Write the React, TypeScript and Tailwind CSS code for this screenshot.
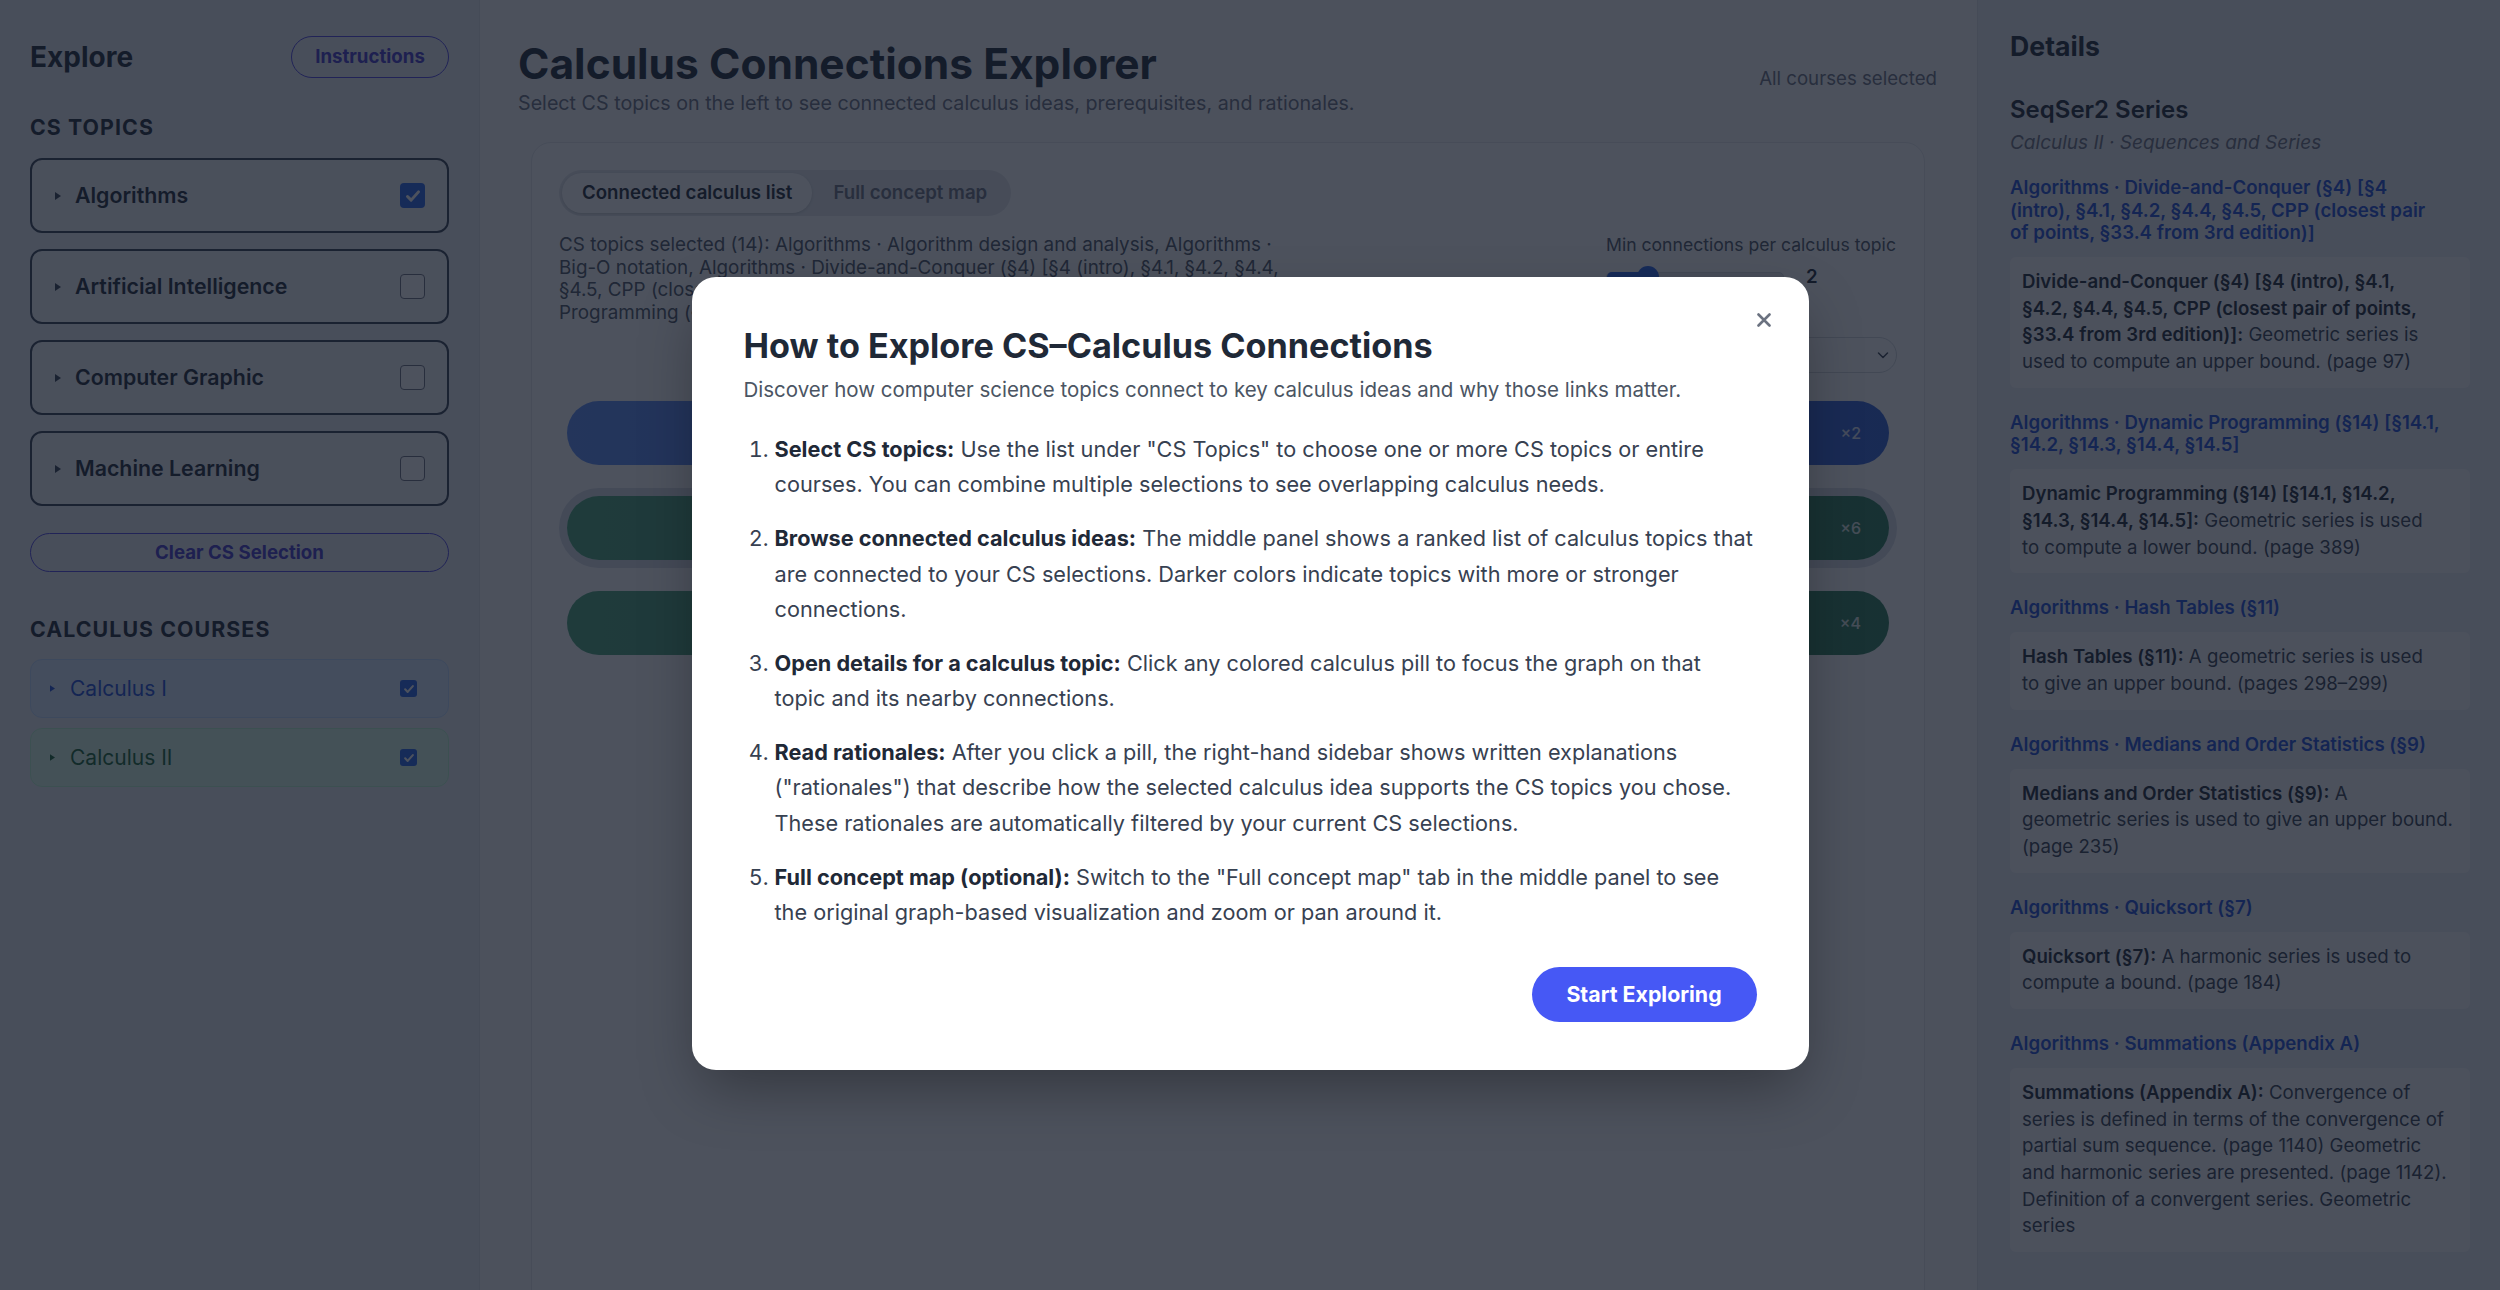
import React from "react";

const topics = ["Algorithms", "Artificial Intelligence", "Computer Graphic", "Machine Learning"];

function Tri({ className }: { className: string }) {
  return (
    <svg width="6" height="8" viewBox="0 0 6 8" className={className}>
      <path d="M0 0L6 4L0 8Z" fill="currentColor" />
    </svg>
  );
}

function CheckMark({ className }: { className: string }) {
  return (
    <svg viewBox="0 0 16 16" className={className} fill="none">
      <path d="M3.6 8.4l2.9 2.9 5.9-6.6" stroke="white" strokeWidth="2.4" strokeLinecap="round" strokeLinejoin="round" />
    </svg>
  );
}

function TopicCard({ name, checked }: { name: string; checked: boolean }) {
  return (
    <div className="flex h-[75px] items-center rounded-[12px] border-2 border-[#374151] bg-white/40 pl-[23px] pr-[22px]">
      <Tri className="text-[#374151]" />
      <span className="ml-[14px] text-[21.33px] font-semibold text-[#1f2937]">{name}</span>
      {checked ? (
        <span className="ml-auto flex h-[25px] w-[25px] items-center justify-center rounded-[4px] bg-[#2563eb]">
          <CheckMark className="h-[20px] w-[20px]" />
        </span>
      ) : (
        <span className="ml-auto h-[25px] w-[25px] rounded-[4px] border-[1.5px] border-[#6b7280] bg-white" />
      )}
    </div>
  );
}

function CourseCard({ name, tone }: { name: string; tone: "blue" | "green" }) {
  const box =
    tone === "blue"
      ? "border-[#bfdbfe] bg-[#dbeafe] text-[#1d4ed8]"
      : "border-[#bbf7d0] bg-[#dcfce7] text-[#166534]";
  return (
    <div className={`flex h-[59px] items-center rounded-[12px] border pl-[19px] pr-[31px] ${box}`}>
      <Tri className="h-[7px] w-[5px]" />
      <span className="ml-[15px] text-[21px]">{name}</span>
      <span className="ml-auto flex h-[17px] w-[17px] items-center justify-center rounded-[3px] bg-[#2563eb]">
        <CheckMark className="h-[14px] w-[14px]" />
      </span>
    </div>
  );
}

function LeftSidebar() {
  return (
    <aside className="w-[480px] shrink-0 border-r border-[#dfe2e8] bg-[#eceef2] px-[30px] pt-[36px]">
      <div className="flex items-center justify-between">
        <h2 className="text-[28px] font-bold leading-[42px] text-[#1f2937]">Explore</h2>
        <button className="h-[42px] w-[158px] rounded-full border border-[#4f46e5] text-[18.67px] font-bold text-[#4338ca]">
          Instructions
        </button>
      </div>
      <h3 className="mt-[35px] text-[21.33px] font-bold uppercase leading-[28px] tracking-wider text-[#1f2937]">
        CS Topics
      </h3>
      <div className="mt-[17px] flex flex-col gap-[16px]">
        {topics.map((t, i) => (
          <TopicCard key={t} name={t} checked={i === 0} />
        ))}
      </div>
      <button className="mt-[27px] h-[39px] w-full rounded-full border border-[#4f46e5] text-[18.67px] font-bold text-[#4338ca]">
        Clear CS Selection
      </button>
      <h3 className="mt-[43px] text-[21.33px] font-bold uppercase leading-[28px] tracking-wider text-[#1f2937]">
        Calculus Courses
      </h3>
      <div className="mt-[16px] flex flex-col gap-[10px]">
        <CourseCard name="Calculus I" tone="blue" />
        <CourseCard name="Calculus II" tone="green" />
      </div>
    </aside>
  );
}

function Pill({ count, tone, selected }: { count: string; tone: string; selected?: boolean }) {
  return (
    <div
      className={`flex h-[64px] items-center justify-end rounded-full pl-[32px] pr-[28px] text-white ${tone} ${
        selected ? "ring-[8px] ring-[#d9dee8]" : ""
      }`}
    >
      <span className="text-[16px] font-medium text-white/85">{count}</span>
    </div>
  );
}

function Main() {
  return (
    <main className="min-w-0 flex-1 pl-[38px] pr-[40px] pt-[40px]">
      <header className="flex items-center justify-between">
        <div>
          <h1 className="text-[42.5px] font-bold leading-[48px] text-[#1f2937]">Calculus Connections Explorer</h1>
          <p className="mt-[1px] text-[19.7px] leading-[28px] text-[#6b7280]">
            Select CS topics on the left to see connected calculus ideas, prerequisites, and rationales.
          </p>
        </div>
        <div className="text-[18.67px] text-[#6b7280]">All courses selected</div>
      </header>

      <section className="ml-[13px] mr-[12px] mt-[25px] h-[1200px] rounded-[20px] border border-[#e5e7eb] bg-white p-[27px]">
        <div className="inline-flex rounded-full bg-[#e5e7eb] p-[3px]">
          <div className="flex h-[40px] items-center rounded-full bg-white px-[20px] text-[18.67px] font-semibold text-[#1f2937] shadow-[0_1px_3px_rgba(0,0,0,0.15)]">
            Connected calculus list
          </div>
          <div className="flex h-[40px] items-center px-[21px] text-[18.67px] font-semibold text-[#6b7280]">
            Full concept map
          </div>
        </div>

        <div className="mt-[18px] flex justify-between">
          <div className="h-[90px] w-[770px] overflow-hidden whitespace-nowrap text-[18.85px] leading-[22.5px] text-[#4b5563]">
            CS topics selected (14): Algorithms · Algorithm design and analysis, Algorithms ·
            <br />
            Big-O notation, Algorithms · Divide-and-Conquer (§4) [§4 (intro), §4.1, §4.2, §4.4,
            <br />
            §4.5, CPP (closest pair of points, §33.4 from 3rd edition)], Algorithms · Dynamic
            <br />
            Programming (§14) [§14.1, §14.2, §14.3, §14.4, §14.5], Algorithms · Hash Tables (§11), …
          </div>
          <div className="w-[291px]">
            <div className="whitespace-nowrap text-[17.6px] leading-[22.5px] text-[#4b5563]">
              Min connections per calculus topic
            </div>
            <div className="mt-[6px] flex h-[28px] items-center">
              <div className="relative h-[10px] w-[178px] rounded-full border border-[#d1d5db] bg-[#e5e7eb]">
                <div className="absolute left-0 top-[-1px] h-[10px] w-[41px] rounded-full bg-[#2563eb]" />
                <div className="absolute left-[30px] top-[-7px] h-[22px] w-[22px] rounded-full bg-[#2563eb]" />
              </div>
              <span className="ml-[22px] text-[18.67px] font-semibold text-[#1f2937]">2</span>
            </div>
            <div className="mt-[46px] flex h-[36px] items-center justify-between rounded-full border border-[#d1d5db] bg-white pl-[14px] pr-[6px]">
              <span className="h-[1px] w-[1px]" />
              <svg width="14" height="14" viewBox="0 0 14 14" fill="none">
                <path d="M2.5 5l4.5 4.5L11.5 5" stroke="#374151" strokeWidth="1.5" strokeLinecap="round" strokeLinejoin="round" />
              </svg>
            </div>
          </div>
        </div>

        <div className="mt-[28px] flex flex-col gap-[31px] pl-[8px] pr-[8px]">
          <Pill count="×2" tone="bg-linear-to-r from-[#5b8cf8] to-[#2f5fd8]" />
          <Pill count="×6" tone="bg-linear-to-r from-[#4aa37a] to-[#2b7d57]" selected />
          <Pill count="×4" tone="bg-linear-to-r from-[#4aa37a] to-[#2b7d57]" />
        </div>
      </section>
    </main>
  );
}

const groups: { heading: React.ReactNode; body: React.ReactNode }[] = [
  {
    heading: (
      <>
        Algorithms · Divide-and-Conquer (§4) [§4
        <br />
        (intro), §4.1, §4.2, §4.4, §4.5, CPP (closest pair
        <br />
        of points, §33.4 from 3rd edition)]
      </>
    ),
    body: (
      <>
        <b className="font-semibold text-[#1f2937]">
          Divide-and-Conquer (§4) [§4 (intro), §4.1,
          <br />
          §4.2, §4.4, §4.5, CPP (closest pair of points,
          <br />
          §33.4 from 3rd edition)]:
        </b>{" "}
        Geometric series is
        <br />
        used to compute an upper bound. (page 97)
      </>
    ),
  },
  {
    heading: (
      <>
        Algorithms · Dynamic Programming (§14) [§14.1,
        <br />
        §14.2, §14.3, §14.4, §14.5]
      </>
    ),
    body: (
      <>
        <b className="font-semibold text-[#1f2937]">
          Dynamic Programming (§14) [§14.1, §14.2,
          <br />
          §14.3, §14.4, §14.5]:
        </b>{" "}
        Geometric series is used
        <br />
        to compute a lower bound. (page 389)
      </>
    ),
  },
  {
    heading: <>Algorithms · Hash Tables (§11)</>,
    body: (
      <>
        <b className="font-semibold text-[#1f2937]">Hash Tables (§11):</b> A geometric series is used
        <br />
        to give an upper bound. (pages 298–299)
      </>
    ),
  },
  {
    heading: <>Algorithms · Medians and Order Statistics (§9)</>,
    body: (
      <>
        <b className="font-semibold text-[#1f2937]">Medians and Order Statistics (§9):</b> A
        <br />
        geometric series is used to give an upper bound.
        <br />
        (page 235)
      </>
    ),
  },
  {
    heading: <>Algorithms · Quicksort (§7)</>,
    body: (
      <>
        <b className="font-semibold text-[#1f2937]">Quicksort (§7):</b> A harmonic series is used to
        <br />
        compute a bound. (page 184)
      </>
    ),
  },
  {
    heading: <>Algorithms · Summations (Appendix A)</>,
    body: (
      <>
        <b className="font-semibold text-[#1f2937]">Summations (Appendix A):</b> Convergence of
        <br />
        series is defined in terms of the convergence of
        <br />
        partial sum sequence. (page 1140) Geometric
        <br />
        and harmonic series are presented. (page 1142).
        <br />
        Definition of a convergent series. Geometric
        <br />
        series
      </>
    ),
  },
];

function RightSidebar() {
  return (
    <aside className="w-[523px] shrink-0 border-l border-[#dfe2e8] bg-[#eceef2] pl-[32px] pr-[30px] pt-[28px]">
      <h2 className="text-[26.67px] font-bold leading-[36px] text-[#1f2937]">Details</h2>
      <h3 className="mt-[30px] text-[24px] font-semibold leading-[32px] text-[#1f2937]">SeqSer2 Series</h3>
      <p className="mt-[4px] text-[19px] italic leading-[26px] text-[#6b7280]">Calculus II · Sequences and Series</p>
      <div className="mt-[21px] flex flex-col gap-[24px]">
        {groups.map((g, i) => (
          <div key={i}>
            <div className="whitespace-nowrap text-[18.67px] font-semibold leading-[22.5px] text-[#1d4ed8]">
              {g.heading}
            </div>
            <div className="mt-[12.5px] whitespace-nowrap rounded-[6px] bg-[#fafbfc] p-[12px] text-[18.67px] leading-[26.67px] text-[#374151]">
              {g.body}
            </div>
          </div>
        ))}
      </div>
    </aside>
  );
}

function Modal() {
  return (
    <div className="absolute inset-0 flex justify-center pt-[277px]">
      <div className="relative h-[793px] w-[1117px] rounded-[24px] bg-white px-[52px] pt-[48px] shadow-[0_25px_60px_-10px_rgba(0,0,0,0.35)]">
        <button className="absolute left-[1065px] top-[36px] h-[14px] w-[14px]">
          <svg viewBox="0 0 14 14" className="h-[14px] w-[14px]" fill="none">
            <path d="M1.5 1.5l11 11M12.5 1.5l-11 11" stroke="#6b7280" strokeWidth="2.6" strokeLinecap="round" />
          </svg>
        </button>
        <h2 className="text-[34.2px] font-bold leading-[42px] text-[#1f2937]">How to Explore CS–Calculus Connections</h2>
        <p className="mt-[8px] text-[20.5px] leading-[30px] text-[#4b5563]">
          Discover how computer science topics connect to key calculus ideas and why those links matter.
        </p>
        <ol className="mt-[27px] flex list-decimal flex-col gap-[18.7px] whitespace-nowrap pl-[31px] text-[21.7px] leading-[35.3px] text-[#374151]">
          <li>
            <b className="font-bold text-[#1f2937]">Select CS topics:</b> Use the list under "CS Topics" to choose one or more CS topics or entire
            <br />
            courses. You can combine multiple selections to see overlapping calculus needs.
          </li>
          <li>
            <b className="font-bold text-[#1f2937]">Browse connected calculus ideas:</b> The middle panel shows a ranked list of calculus topics that
            <br />
            are connected to your CS selections. Darker colors indicate topics with more or stronger
            <br />
            connections.
          </li>
          <li>
            <b className="font-bold text-[#1f2937]">Open details for a calculus topic:</b> Click any colored calculus pill to focus the graph on that
            <br />
            topic and its nearby connections.
          </li>
          <li>
            <b className="font-bold text-[#1f2937]">Read rationales:</b> After you click a pill, the right-hand sidebar shows written explanations
            <br />
            ("rationales") that describe how the selected calculus idea supports the CS topics you chose.
            <br />
            These rationales are automatically filtered by your current CS selections.
          </li>
          <li>
            <b className="font-bold text-[#1f2937]">Full concept map (optional):</b> Switch to the "Full concept map" tab in the middle panel to see
            <br />
            the original graph-based visualization and zoom or pan around it.
          </li>
        </ol>
        <div className="mt-[37px] flex justify-end">
          <button className="h-[55px] w-[225px] rounded-full bg-[#4658f5] text-[21.33px] font-bold text-white">
            Start Exploring
          </button>
        </div>
      </div>
    </div>
  );
}

export default function App() {
  return (
    <div className="relative h-[1290px] w-[2500px] overflow-hidden bg-[#fafbfc] font-[Inter,sans-serif] text-[#1f2937]">
      <div className="flex h-full">
        <LeftSidebar />
        <Main />
        <RightSidebar />
      </div>
      <div className="absolute inset-0 bg-[rgba(17,24,39,0.75)]" />
      <Modal />
    </div>
  );
}
